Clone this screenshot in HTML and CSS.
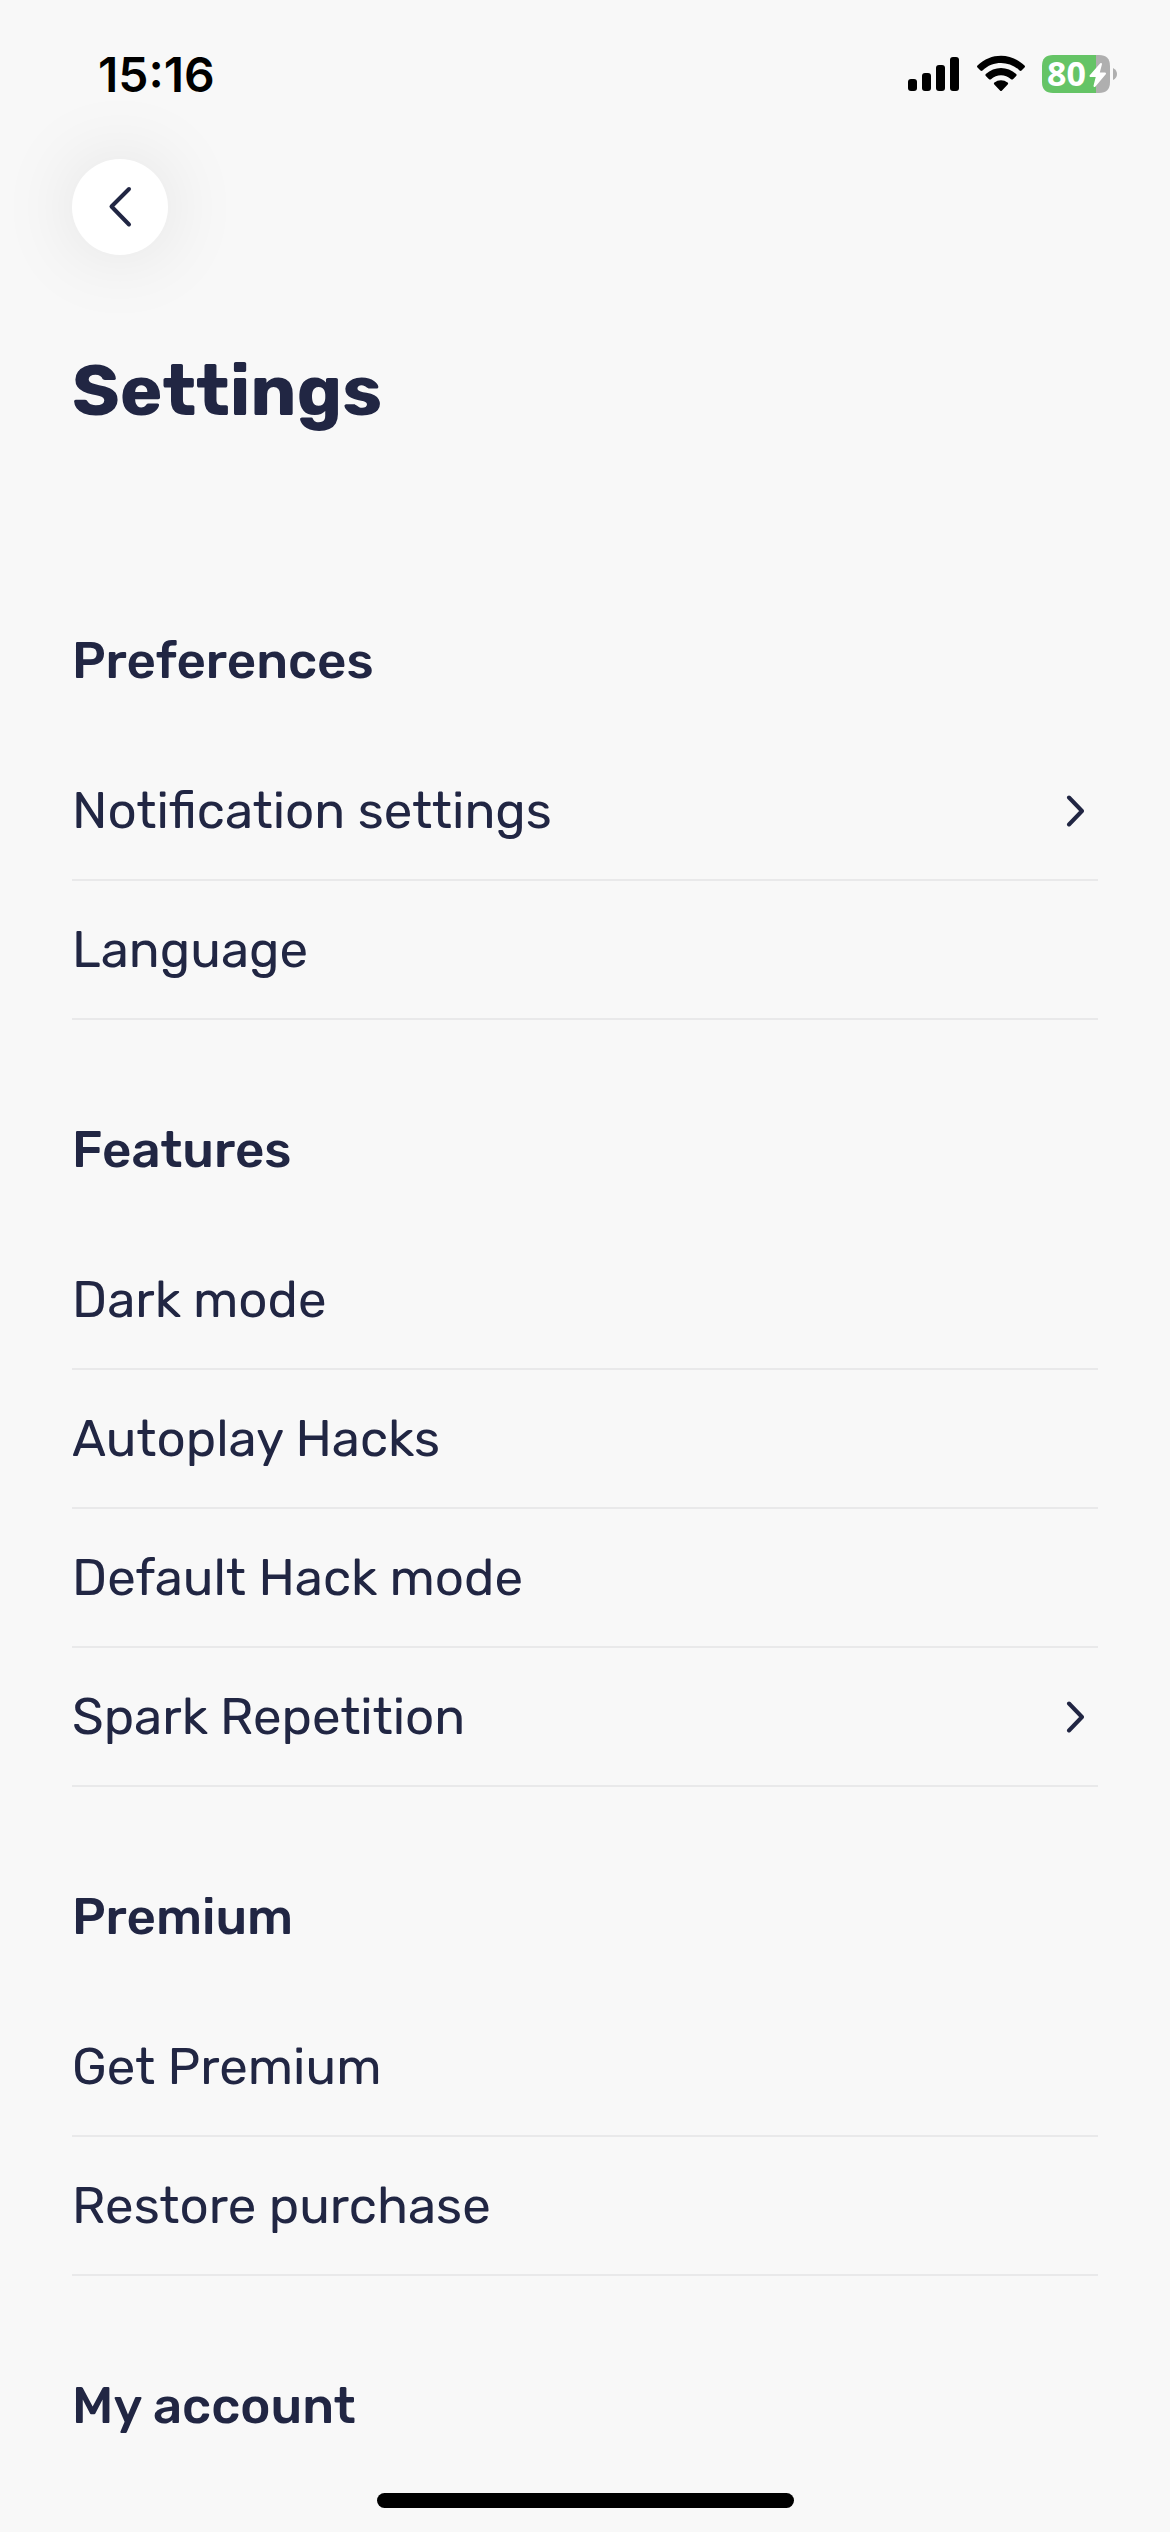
FILE: index.html
```html
<!DOCTYPE html>
<html lang="en">
<head>
  <meta charset="UTF-8">
  <meta name="viewport" content="width=device-width, initial-scale=1.0">
  <title>Settings</title>
  <link rel="stylesheet" href="styles.css">
</head>
<body>
  <!-- Status Bar -->
  <div class="status-bar">
    <span class="time">15:16</span>
    <div class="status-icons">
      <svg width="52" height="38" viewBox="0 0 52 38" aria-label="Signal">
        <rect x="0" y="24" width="9" height="12" rx="3"/>
        <rect x="14" y="18" width="9" height="18" rx="3"/>
        <rect x="28" y="10" width="9" height="26" rx="3"/>
        <rect x="42" y="2" width="9" height="34" rx="3"/>
      </svg>
      <svg width="50" height="38" viewBox="0 0 50 38" aria-label="Wi-Fi">
        <path d="M1.5 10.5Q0.5 11.5 1.5 12.5L4.5 15.5Q5.500 16.300 6.500 15.400C17 5.600 33 5.600 43.500 15.400Q44.500 16.300 45.500 15.500L48.500 12.500Q49.500 11.500 48.500 10.500C35 -2.500 15 -2.500 1.500 10.500Z"/>
        <path d="M9.800 19.100Q8.800 20.100 9.800 21.100L13 24.200Q14 25 15 24.200C20.800 18.900 29.200 18.900 35 24.200Q36 25 37 24.200L40.200 21.100Q41.200 20.100 40.200 19.100C31.500 10.900 18.500 10.900 9.800 19.100Z"/>
        <path d="M18.300 27.600Q17.300 28.600 18.300 29.600L24 35.400Q25 36.400 26 35.400L31.700 29.600Q32.700 28.600 31.700 27.600C27.800 24.300 22.200 24.300 18.300 27.600Z"/>
      </svg>
      <svg class="battery" width="76" height="38" viewBox="0 0 76 38" aria-label="Battery">
        <path fill="#afafaf" d="M54 0H57Q68 0 68 11V27Q68 38 57 38H54Z"/>
        <path fill="#65c466" d="M11 0H54V38H11Q0 38 0 27V11Q0 0 11 0Z"/>
        <path fill="#afafaf" d="M71 13Q75 15 75 19T71 25Z"/>
        <text class="battery-level" x="5" y="31">80</text>
        <path class="bolt" d="M59 9L48.500 21H55L52.500 31L63 18.500H56.500Z"/>
      </svg>
    </div>
  </div>

  <!-- Header -->
  <header class="header">
    <button type="button" class="back" aria-label="Back">
      <svg width="24" height="42" viewBox="0 0 24 42">
        <path d="M21 3L3.500 20.500L21 38.500"/>
      </svg>
    </button>
    <h1>Settings</h1>
  </header>

  <main>
    <section>
      <h2>Preferences</h2>
      <a href="#" class="row">Notification settings
        <svg class="chevron" width="18" height="32" viewBox="0 0 18 32"><path d="M3 2.500L16 16L3 29.500"/></svg>
      </a>
      <a href="#" class="row">Language</a>
    </section>

    <section>
      <h2>Features</h2>
      <a href="#" class="row">Dark mode</a>
      <a href="#" class="row">Autoplay Hacks</a>
      <a href="#" class="row">Default Hack mode</a>
      <a href="#" class="row">Spark Repetition
        <svg class="chevron" width="18" height="32" viewBox="0 0 18 32"><path d="M3 2.500L16 16L3 29.500"/></svg>
      </a>
    </section>

    <section>
      <h2>Premium</h2>
      <a href="#" class="row">Get Premium</a>
      <a href="#" class="row">Restore purchase</a>
    </section>

    <section>
      <h2>My account</h2>
    </section>
  </main>

  <div class="home-indicator"></div>
</body>
</html>
```

FILE: styles.css
```css
* {
  box-sizing: border-box;
}
body {
  margin: 0;
  background-color: #f8f8f8;
  color: #212643;
  font-family: Rubik, Roboto, sans-serif;
}
.status-bar {
  display: flex;
  justify-content: space-between;
  align-items: center;
  height: 148px;
  padding: 0 52px 0 98px;
}
.time {
  color: #000;
  font-family: Inter, sans-serif;
  font-size: 48px;
  font-weight: 600;
}
.status-icons {
  display: flex;
  gap: 16px;
}
.battery {
  overflow: visible;
}
.battery-level {
  fill: #fff;
  font-family: "Noto Sans", sans-serif;
  font-size: 34px;
  font-weight: 700;
}
.bolt {
  fill: #fff;
  stroke: #fff;
  stroke-width: 2px;
  stroke-linejoin: round;
}
.header {
  padding: 11px 72px 0;
}
.back {
  display: flex;
  align-items: center;
  justify-content: center;
  width: 96px;
  height: 96px;
  padding: 0;
  border: none;
  border-radius: 50%;
  background-color: #fff;
  box-shadow: 0 0 80px rgba(0,0,0,0.1);
  cursor: pointer;
}
.back path,
.chevron path {
  fill: none;
  stroke: #212643;
  stroke-width: 4px;
  stroke-linecap: round;
  stroke-linejoin: round;
}
h1 {
  margin: 92px 0 96px;
  font-size: 72px;
  line-height: 88px;
  font-weight: 700;
}
main {
  padding: 0 72px;
}
h2 {
  margin: 0;
  padding: 100px 0 51px;
  font-size: 51px;
  line-height: 60px;
  font-weight: 500;
}
.row {
  display: flex;
  align-items: center;
  justify-content: space-between;
  height: 139px;
  padding-right: 14px;
  border-bottom: 2px solid #e9e9ea;
  color: #212643;
  font-size: 51px;
  line-height: 60px;
  text-decoration: none;
}
.home-indicator {
  position: fixed;
  bottom: 24px;
  left: 50%;
  width: 417px;
  height: 15px;
  margin-left: -208px;
  border-radius: 8px;
  background-color: #000;
}
```
